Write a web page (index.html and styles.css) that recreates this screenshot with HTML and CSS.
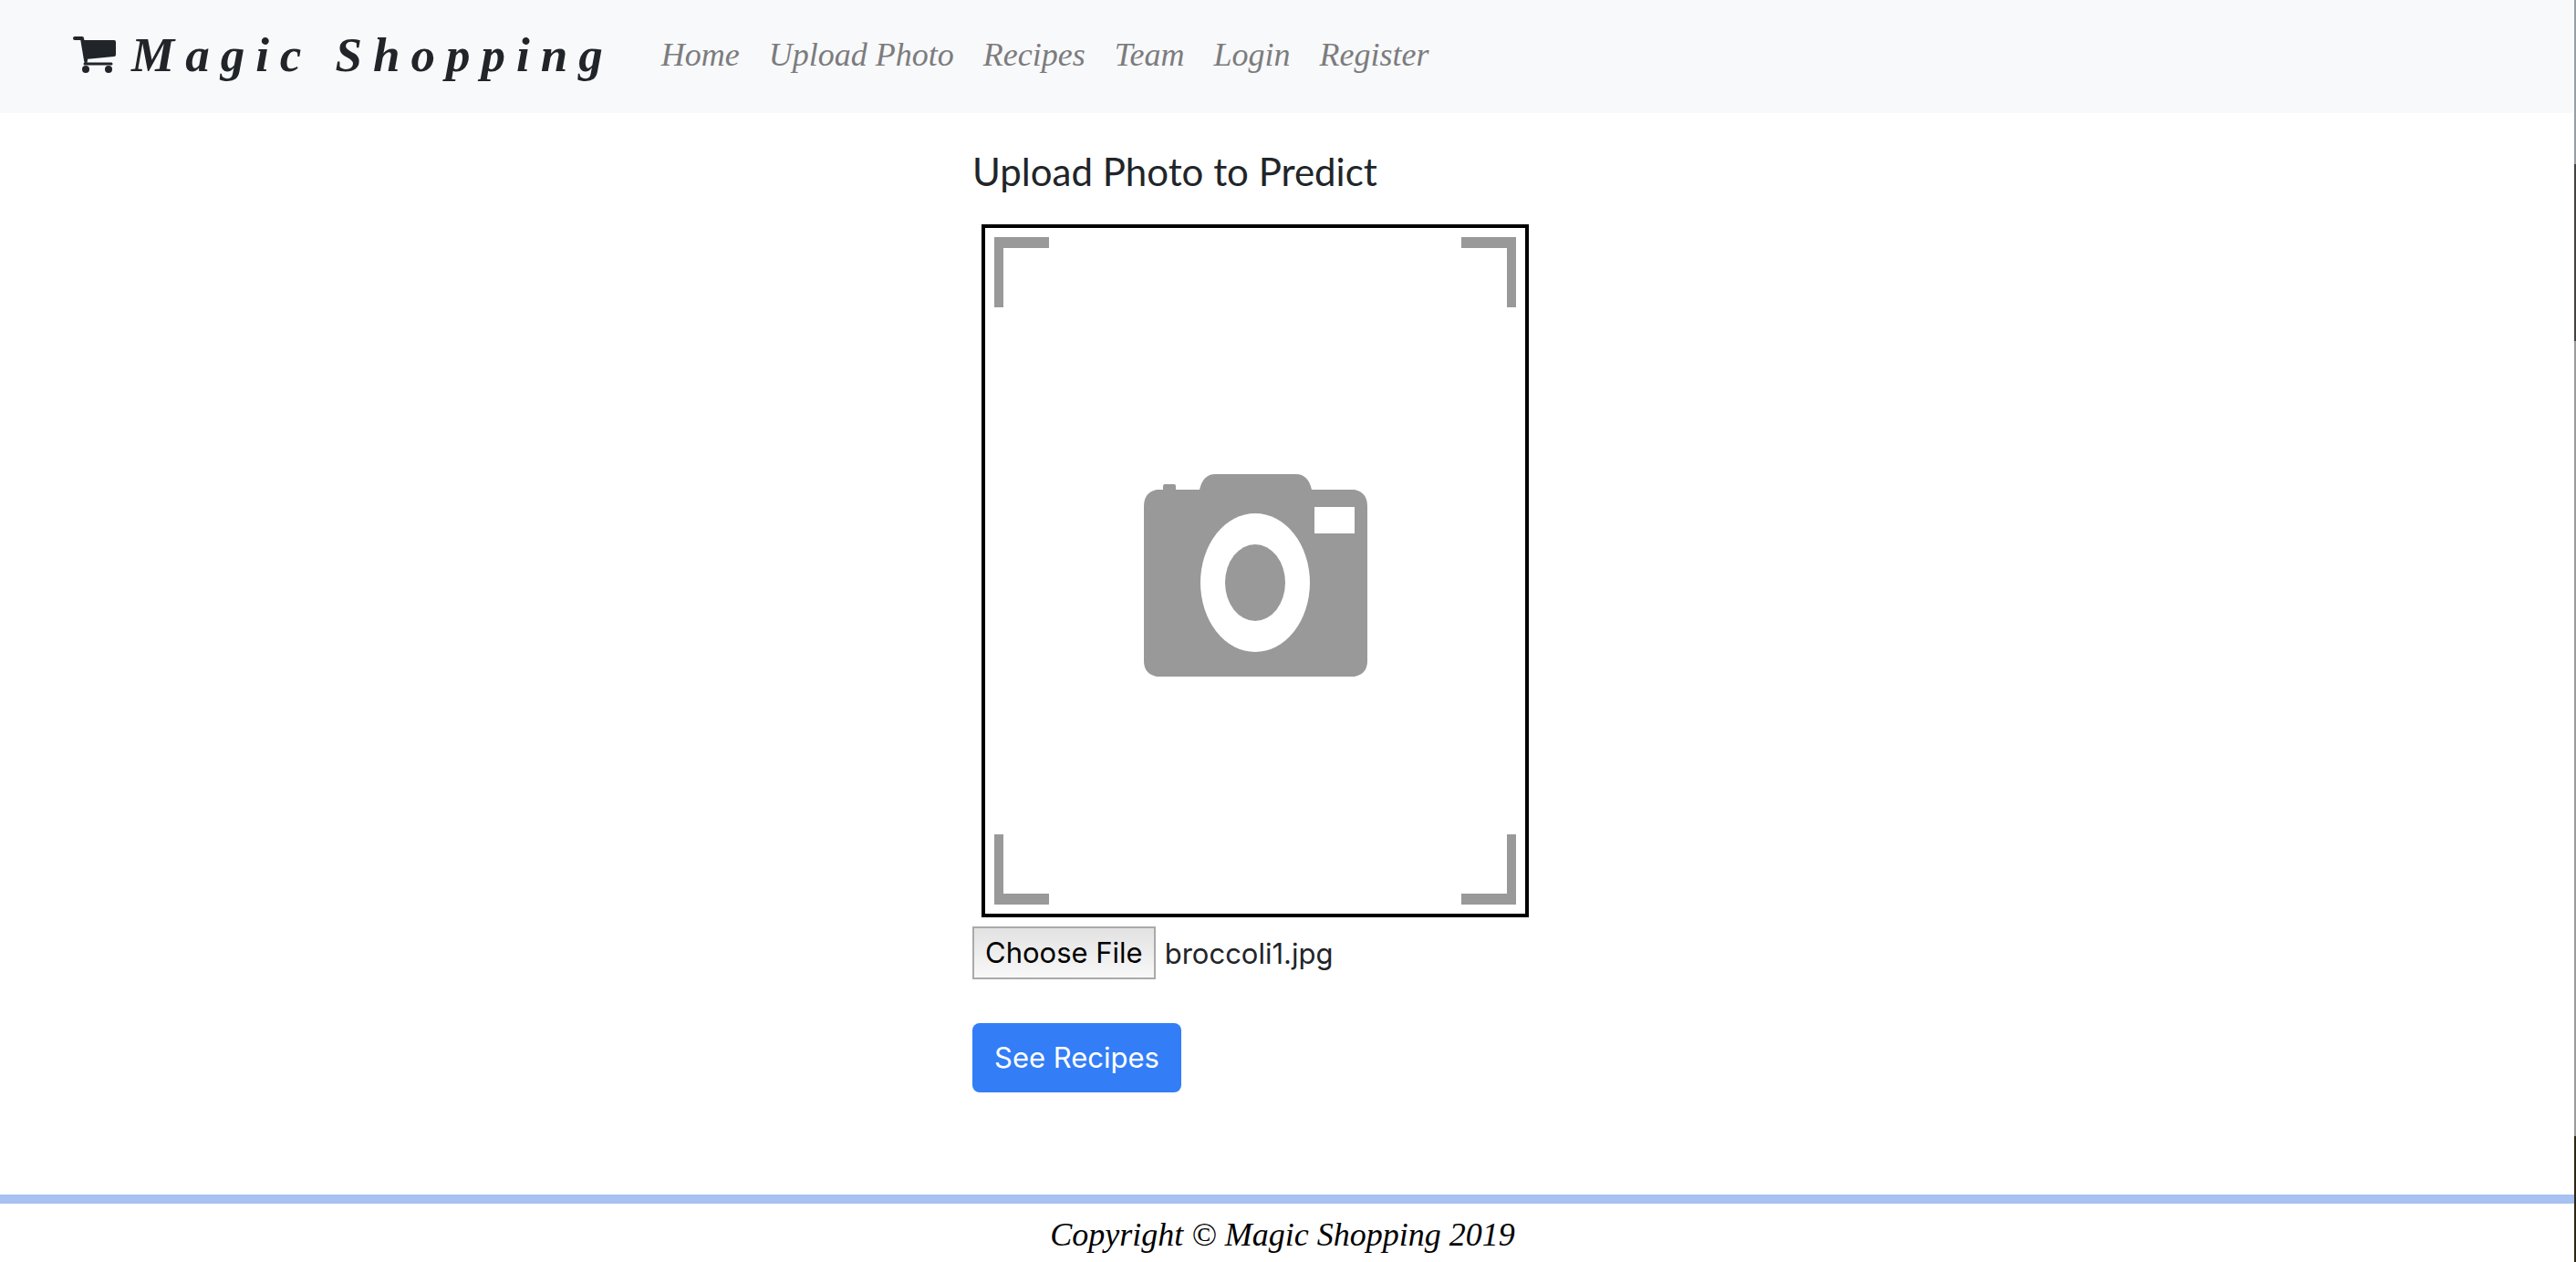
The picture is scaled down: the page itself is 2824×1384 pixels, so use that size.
FILE: index.html
```
<!DOCTYPE html>
<html lang="en">
<head>
  <meta charset="utf-8">
  <title>Magic Shopping</title>
  <meta name="viewport" content="width=device-width, initial-scale=1">
  <link rel="stylesheet" href="styles.css">
</head>
<body>
  <div class="page">
    <header class="navbar">
      <a class="brand" href="#">
        <svg class="brand-icon" viewBox="0 0 48 42" aria-hidden="true">
          <path d="M2 3h8l4 24" fill="none" stroke="currentColor" stroke-width="4" stroke-linecap="round" stroke-linejoin="round"/>
          <path d="M9 5h36q2 0 2 2v14q0 2-2 2L14 26z" fill="currentColor"/>
          <path d="M14 25v6M13 31h29" fill="none" stroke="currentColor" stroke-width="3" stroke-linecap="round"/>
          <circle cx="14" cy="37" r="4" fill="currentColor"/>
          <circle cx="39" cy="37" r="4" fill="currentColor"/>
        </svg>
        <span class="brand-name">Magic Shopping</span>
      </a>
      <nav class="nav">
        <a class="nav-link" href="#">Home</a>
        <a class="nav-link" href="#">Upload Photo</a>
        <a class="nav-link" href="#">Recipes</a>
        <a class="nav-link" href="#">Team</a>
        <a class="nav-link" href="#">Login</a>
        <a class="nav-link" href="#">Register</a>
      </nav>
    </header>

    <main class="content">
      <h1 class="title">Upload Photo to Predict</h1>
      <form class="upload">
        <div class="preview">
          <svg class="placeholder" viewBox="0 0 572 732" role="img" aria-label="Photo preview">
            <g fill="#999">
              <path d="M0 0h60v12H10v65H0zM572 0h-60v12h50v65h10zM0 732h60v-12H10v-65H0zM572 732h-60v-12h50v-65h10z"/>
              <path d="M178 277h7v-4q0-2 2-2h10q2 0 2 2v4h26q4-17 17-17h89q13 0 17 17h47q14 3 14 18v170q0 14-14 17H178q-14-3-14-17V295q0-15 14-18z"/>
            </g>
            <ellipse cx="286" cy="379" rx="60" ry="76" fill="#fff"/>
            <ellipse cx="286" cy="379" rx="33" ry="42" fill="#999"/>
            <path d="M351 296h44v29h-44z" fill="#fff"/>
          </svg>
        </div>
        <div class="file-row">
          <input class="file-input" type="file" id="photo" accept="image/*">
          <label class="file-button" for="photo">Choose File</label>
          <span class="file-name">broccoli1.jpg</span>
        </div>
        <button class="submit" type="button">See Recipes</button>
      </form>
    </main>

    <footer class="footer">Copyright © Magic Shopping 2019</footer>
  </div>
</body>
</html>
```
FILE: styles.css
```
* {
  box-sizing: border-box;
}

body {
  margin: 0;
  padding-right: 2px;
  color: #212529;
  font-family: Inter, "Liberation Sans", sans-serif;
  font-size: 31px;
  background: linear-gradient(#969fa6 0 13%, #45423f 13% 27%, #9c9c9a 27% 90%, #2e2614 90%);
}

.page {
  display: flex;
  flex-direction: column;
  min-height: 100vh;
  background: #fff;
}

.navbar {
  display: flex;
  align-items: center;
  gap: 52px;
  min-height: 124px;
  padding: 0 80px 4px;
  background: #f8f9fb;
  font-family: "Apple Chancery", "Liberation Serif", serif;
  font-style: italic;
}

.brand {
  display: flex;
  align-items: center;
  gap: 16px;
  color: #212529;
  text-decoration: none;
}

.brand-icon {
  width: 48px;
  height: 42px;
}

.brand-name {
  font-size: 53px;
  font-weight: 700;
  line-height: 64px;
  letter-spacing: 12px;
  white-space: nowrap;
}

.nav {
  display: flex;
  gap: 32px;
}

.nav-link {
  color: #7c7c7d;
  font-size: 36px;
  line-height: 48px;
  text-decoration: none;
  white-space: nowrap;
}

.content {
  width: 100%;
  max-width: 690px;
  margin: 0 auto;
}

.title {
  margin: 36px 0 30px;
  font-family: Papyrus, Lato, sans-serif;
  font-size: 42px;
  font-weight: 400;
  line-height: 56px;
}

.upload {
  display: flex;
  flex-direction: column;
  align-items: flex-start;
}

.preview {
  width: 600px;
  max-width: 100%;
  margin-left: 10px;
  padding: 10px;
  border: 4px solid #000;
}

.placeholder {
  display: block;
  width: 100%;
  height: auto;
}

.file-row {
  display: flex;
  align-items: center;
  gap: 10px;
  margin: 10px 0 48px;
}

.file-input {
  position: absolute;
  width: 1px;
  height: 1px;
  opacity: 0;
}

.file-button {
  padding: 7px 12px;
  border: 2px solid #aaa;
  background: linear-gradient(#e2e2e2, #f8f8f8);
  color: #000;
  line-height: 40px;
}

.submit {
  padding: 18px 24px;
  border: 0;
  border-radius: 8px;
  background: #337df7;
  color: #fff;
  font: inherit;
  line-height: 40px;
}

.footer {
  margin-top: 112px;
  padding: 10px 10px 6px 0;
  border-top: 10px solid #a6c1f2;
  color: #000;
  font-family: "Apple Chancery", "Liberation Serif", serif;
  font-size: 36px;
  font-style: italic;
  line-height: 48px;
  text-align: center;
}
```
